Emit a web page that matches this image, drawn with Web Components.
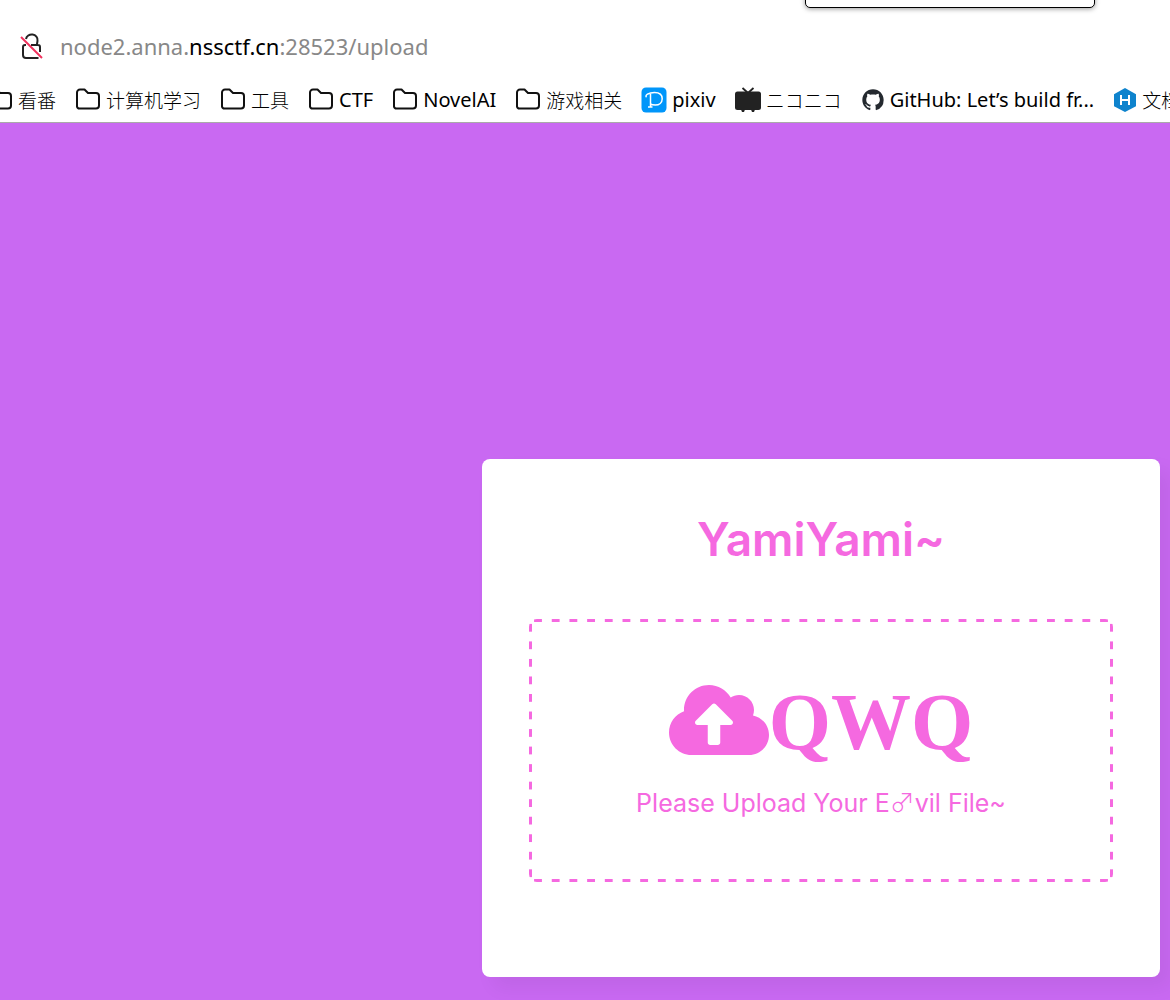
<!DOCTYPE html>
<html lang="zh-CN">
<head>
<meta charset="utf-8">
<title>YamiYami~</title>
<style>
html, body { height: 100%; margin: 0; }
body { background: #c969f2; }
</style>
</head>
<body>
<app-window></app-window>
<script>
const define = (name, html) => customElements.define(name, class extends HTMLElement {
  constructor() {
    super();
    this.attachShadow({ mode: "open" }).innerHTML = html;
  }
});

const icons = {
  folder: `<svg width="26" height="26" viewBox="0 0 26 26" fill="none" stroke="#111" stroke-width="2" stroke-linejoin="round"><path d="M2 19.500V5.500a3 3 0 0 1 3-3H9.500l3.500 3.500H21a3 3 0 0 1 3 3V18.500a3 3 0 0 1-3 3H4.500A2.500 2.500 0 0 1 2 19.500z"/></svg>`,
  pixiv: `<svg width="26" height="26" viewBox="0 0 26 26" fill="none"><rect width="25" height="25" x=".5" y=".5" rx="4.500" fill="#0096fa"/><path d="M5.500 10.200C3.500 8.500 7.500 5.500 13.500 5.500c5 0 7.700 2.700 7.700 6.300 0 3.800-3 6.300-6.900 6.300-2.200 0-3.800-.4-5-1.200M9.500 7v12.500M7 20h4.500" stroke="#fff" stroke-width="1.500"/></svg>`,
  tv: `<svg width="26" height="26" viewBox="0 0 26 26" fill="#222"><path d="M7.500 1 13 6 18.500 1" fill="none" stroke="#222" stroke-width="1.800"/><rect y="4.500" width="26" height="18.500" rx="2.500"/><path d="M6 22.500h4l-1 2.500H7zM16 22.500h4l-1 2.500h-2z"/></svg>`,
  github: `<svg width="24" height="24" viewBox="-1 -1 18 18" fill="#24292f"><path d="M8 0C3.580 0 0 3.580 0 8c0 3.540 2.290 6.530 5.470 7.590.4.070.55-.17.55-.38 0-.19-.01-.82-.01-1.490-2.010.37-2.530-.49-2.690-.94-.09-.23-.48-.94-.82-1.130-.28-.15-.68-.52-.01-.53.63-.01 1.080.58 1.230.82.72 1.210 1.870.87 2.330.66.070-.52.28-.87.51-1.070-1.780-.2-3.640-.89-3.640-3.950 0-.87.31-1.590.82-2.150-.08-.2-.36-1.020.08-2.120 0 0 .67-.21 2.200.82.64-.18 1.320-.27 2-.27s1.360.09 2 .27c1.530-1.040 2.200-.82 2.200-.82.44 1.100.16 1.920.08 2.120.51.56.82 1.270.82 2.150 0 3.070-1.870 3.750-3.650 3.950.29.25.54.73.54 1.480 0 1.070-.01 1.930-.01 2.200 0 .21.15.46.55.38A8.010 8.010 0 0 0 16 8c0-4.420-3.580-8-8-8z"/></svg>`,
  hexo: `<svg width="24" height="26" viewBox="0 0 24 26"><path fill="#0e83cd" d="M12 1 23 7.200v12L12 25 1 19.200v-12z"/><path d="M8 8v10M16 8v10M8 13h8" stroke="#fff" stroke-width="2"/></svg>`
};

define("address-bar", `
<style>
:host { display: flex; align-items: center; gap: 16px; height: 60px; padding: 0 20px;
  font: 22px/32px "Noto Sans", sans-serif; color: #888; }
svg { flex: none; }
b { font-weight: 400; color: #000; }
</style>
<svg width="24" height="28" viewBox="0 0 24 28" fill="none" stroke="#222" stroke-width="2"><path d="M6 7a5.500 5 0 0 1 11.500 1.500c0 1.500-.5 2.500-.5 4M11 13h7a2 2 0 0 1 2 2v5M6 13H5a2 2 0 0 0-2 2v8a3 3 0 0 0 3 3h12.500"/><path d="M1 5 22 26" stroke="#f0305c"/></svg>
<span>node2.anna.<b>nssctf.cn</b>:28523/upload</span>`);

customElements.define("book-mark", class extends HTMLElement {
  constructor() {
    super();
    this.attachShadow({ mode: "open" }).innerHTML = `
<style>
:host { display: block; flex: none; }
a { display: flex; align-items: center; gap: 5px; color: #000; text-decoration: none; white-space: nowrap; }
svg { display: block; flex: none; }
</style>
<a href="#">${icons[this.getAttribute("icon")]}<span><slot></slot></span></a>`;
  }
});

define("bookmark-bar", `
<style>
:host { display: flex; align-items: center; gap: 19px; height: 46px; padding-top: 2px; box-sizing: border-box; margin-left: -13px;
  font: 20px/28px "Noto Sans", sans-serif; }
.zh, .jp { font-size: 19px; font-weight: 300; }
.zh { font-family: "Noto Sans CJK SC", sans-serif; }
.jp { font-family: "Noto Sans CJK JP", sans-serif; }
</style>
<book-mark icon="folder" class="zh">看番</book-mark>
<book-mark icon="folder" class="zh">计算机学习</book-mark>
<book-mark icon="folder" class="zh">工具</book-mark>
<book-mark icon="folder">CTF</book-mark>
<book-mark icon="folder">NovelAI</book-mark>
<book-mark icon="folder" class="zh">游戏相关</book-mark>
<book-mark icon="pixiv">pixiv</book-mark>
<book-mark icon="tv" class="jp">ニコニコ</book-mark>
<book-mark icon="github">GitHub: Let’s build fr...</book-mark>
<book-mark icon="hexo" class="zh">文档</book-mark>`);

define("browser-chrome", `
<style>
:host { display: block; position: relative; overflow: hidden; background: #fff; border-bottom: 1px solid #aaa; padding: 16px 0 0; }
.popup { position: absolute; top: -12px; right: 75px; width: 288px; height: 18px; border: 1px solid #000; border-radius: 5px; background: #fff; box-shadow: 0 1px 5px #0006; }
</style>
<div class="popup"></div>
<address-bar></address-bar>
<bookmark-bar></bookmark-bar>`);

define("upload-drop", `
<style>
:host { display: block; }
button { display: flex; flex-direction: column; align-items: center; justify-content: center; gap: 20px;
  width: 100%; height: 263px; padding: 0; border: 0; border-radius: 8px; cursor: pointer; color: inherit;
  --h: linear-gradient(90deg, transparent 27%, currentColor 27% 73%, transparent 73%);
  --v: linear-gradient(transparent 27%, currentColor 27% 73%, transparent 73%);
  background: var(--h) top / calc(100% / 33) 3px repeat-x, var(--h) bottom / calc(100% / 33) 3px repeat-x,
    var(--v) left / 3px calc(100% / 15) repeat-y, var(--v) right / 3px calc(100% / 15) repeat-y; }
.mark { display: flex; align-items: flex-start; font: 700 80px/84px "Liberation Serif", serif; }
.hint { font: 25px/38px Inter, sans-serif; }
.sign { font-family: "Noto Sans CJK SC", sans-serif; font-weight: 300; line-height: 1; }
</style>
<button type="button">
<span class="mark"><svg width="100" height="80" viewBox="0 0 640 512" fill="currentColor"><path d="M537.6 226.6c4.1-10.7 6.4-22.4 6.4-34.6 0-53-43-96-96-96-19.7 0-38.1 6-53.3 16.2C367 64.2 315.3 32 256 32c-88.4 0-160 71.6-160 160 0 2.7.1 5.4.2 8.1C40.2 219.8 0 273.2 0 336c0 79.5 64.5 144 144 144h368c70.7 0 128-57.3 128-128 0-61.9-44-113.6-102.4-125.4zM393.4 288H328v112c0 8.8-7.2 16-16 16h-48c-8.8 0-16-7.2-16-16V288h-65.4c-14.3 0-21.4-17.2-11.3-27.3l105.4-105.4c6.2-6.2 16.4-6.2 22.6 0l105.4 105.4c10.1 10.1 2.9 27.3-11.3 27.3z"/></svg><span>QWQ</span></span>
<span class="hint">Please Upload Your E<span class="sign">♂</span>vil File~</span>
</button>`);

define("upload-card", `
<style>
:host { display: block; box-sizing: border-box; width: 58%; padding: 48px 47px 95px; background: #fff; color: #f569e0;
  border-radius: 8px; box-shadow: 11px 11px 19px rgba(0,0,0,.05); }
h1 { margin: 0 0 48px; font: 600 46px/64px Inter, sans-serif; text-align: center; }
</style>
<h1>YamiYami~</h1>
<upload-drop></upload-drop>`);

define("app-window", `
<style>
:host { display: flex; flex-direction: column; min-height: 100%; overflow: hidden; }
main { flex: 1; display: flex; justify-content: flex-end; align-items: flex-end; padding: 23px 10px 23px 0; }
upload-card { width: 100%; max-width: 678px; }
</style>
<browser-chrome></browser-chrome>
<main><upload-card></upload-card></main>`);
</script>
</body>
</html>
